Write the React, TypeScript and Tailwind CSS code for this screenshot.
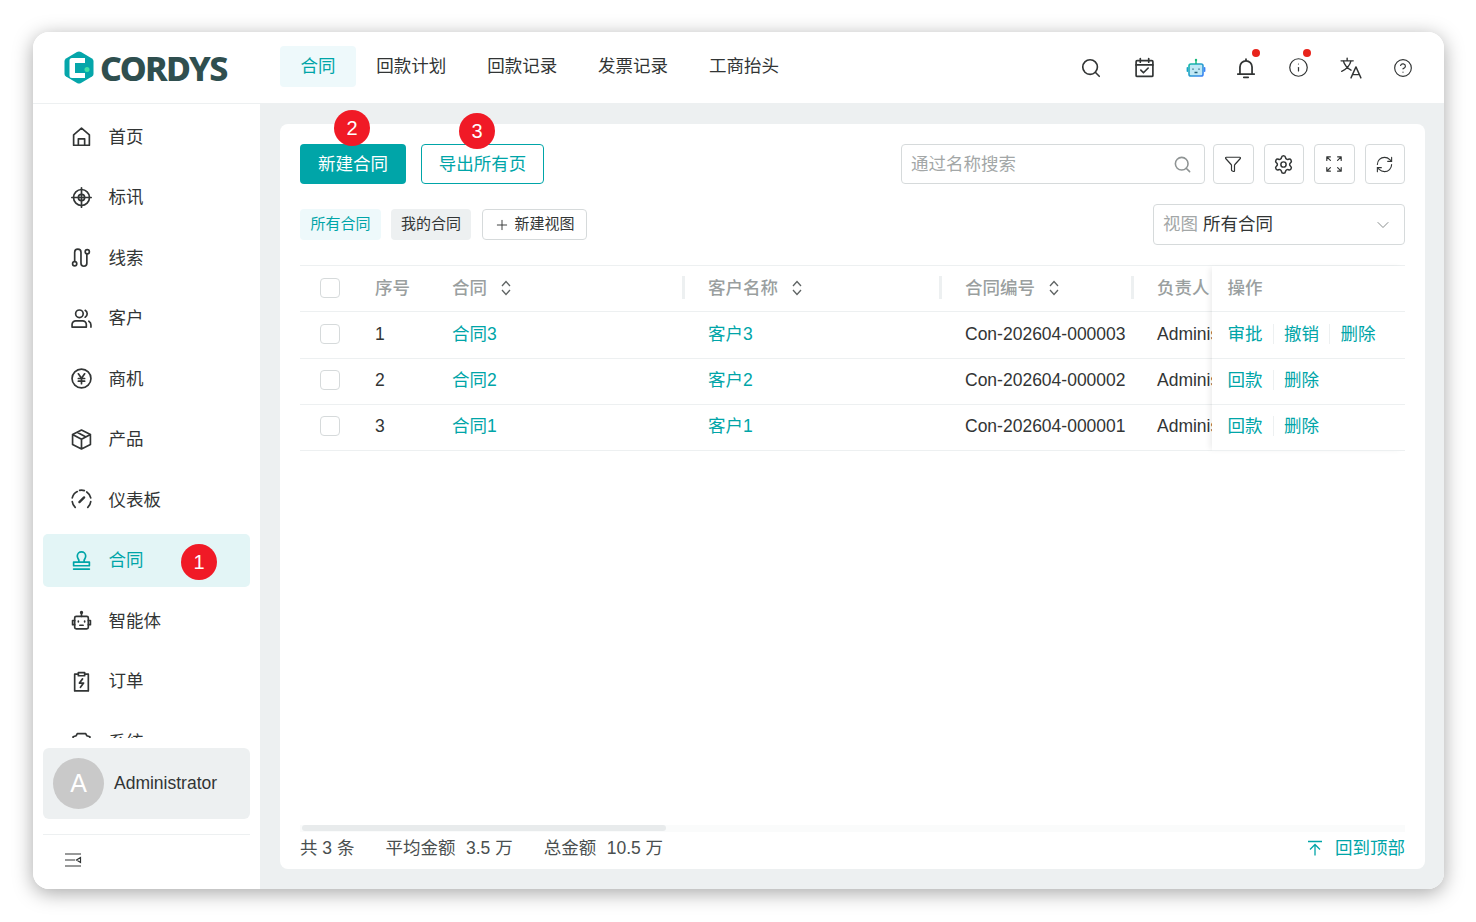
import { ChevronDown, CircleHelp, Funnel, Info, Plus, RefreshCw, Search, Settings } from 'lucide-react';
import type { ReactNode } from 'react';

function Ico({ children, size = 21 }: { children: ReactNode; size?: number }) {
  return (
    <svg width={size} height={size} viewBox="0 0 20 20" fill="none" stroke="currentColor" strokeWidth="1.600" strokeLinecap="round" strokeLinejoin="round" className="shrink-0">
      {children}
    </svg>
  );
}

const menu: { label: string; icon: ReactNode; active?: boolean }[] = [
  { label: '首页', icon: <path d="M2.500 8.500 10 2l7.500 6.500v9.800h-15ZM7 18v-5.800h6V18" /> },
  {
    label: '标讯',
    icon: (
      <>
        <circle cx="10" cy="10" r="7.600" />
        <circle cx="10" cy="10" r="3" />
        <path d="M10 .8v18.400M.8 10h18.400" />
      </>
    ),
  },
  {
    label: '线索',
    icon: (
      <>
        <path d="M3.500 13.500V5a3 3 0 0 1 6 0v10.500a2.800 2.800 0 0 0 5.600 0V7" />
        <circle cx="3.500" cy="16" r="2" />
        <circle cx="15.500" cy="4.500" r="2" />
      </>
    ),
  },
  {
    label: '客户',
    icon: (
      <>
        <circle cx="8" cy="5.500" r="3.600" />
        <path d="M1 18.200v-2.400a3.600 3.600 0 0 1 3.600-3.600h6.400a3.600 3.600 0 0 1 3.600 3.600v2.400ZM13.500 2.200a3.800 3.800 0 0 1 0 6.600M19 18.200v-2a4 4 0 0 0-2-3.600" />
      </>
    ),
  },
  {
    label: '商机',
    icon: (
      <>
        <circle cx="10" cy="10" r="9" />
        <path d="M7 5.500l3 4.200 3-4.200M10 9.700v5.300M7 10h6M7 12.500h6" />
      </>
    ),
  },
  { label: '产品', icon: <path d="M10 1 18.500 5.300v9.400L10 19l-8.500-4.300V5.300ZM1.500 5.300 10 9.800l8.500-4.500M10 9.800V19M5.800 3.200l8.500 4.400" /> },
  {
    label: '仪表板',
    icon: (
      <>
        <path d="M4 17.500A9 9 0 0 1 1.200 12M1.200 8.500A9 9 0 0 1 6 2.400M8.200 1.300a9 9 0 0 1 4.500.2M15 2.800a9 9 0 0 1 3.800 5.700M18.800 12a9 9 0 0 1-2.800 5.500" />
        <path d="M8 12.500 12.500 8" strokeWidth="2.200" />
      </>
    ),
  },
  {
    label: '合同',
    active: true,
    icon: (
      <>
        <path d="M7.500 11.500V10c0-1.200-1.500-2-1.500-4.200a4 4 0 0 1 8 0C14 8 12.500 8.800 12.500 10v1.500" />
        <path d="M2.500 15v-3.500h15V15ZM2.500 18.200h15" />
      </>
    ),
  },
  {
    label: '智能体',
    icon: (
      <>
        <rect x="3.500" y="6" width="13" height="12" rx="1.500" />
        <path d="M10 6V3M3.500 10H1.500v4h2M16.500 10h2v4h-2M8.500 14.500h3" />
        <circle cx="10" cy="2.300" r=".8" />
        <path d="M7 10.500v.8M13 10.500v.8" />
      </>
    ),
  },
  {
    label: '订单',
    icon: (
      <>
        <path d="M7 3H3.500v16h13V3H13M7 1.500h6V4.500H7Z" />
        <path d="M11 7.500 8 11.500h4l-3 4" />
      </>
    ),
  },
  {
    label: '系统',
    icon: <path d="M6 2.500h8l1 2 3 1v4l-2 2 1 3-2 3H5l-2-3 1-3-2-2v-4l3-1Z" />,
  },
];

const rows = [
  { no: 1, name: '合同3', customer: '客户3', code: 'Con-202604-000003', actions: ['审批', '撤销', '删除'] },
  { no: 2, name: '合同2', customer: '客户2', code: 'Con-202604-000002', actions: ['回款', '删除'] },
  { no: 3, name: '合同1', customer: '客户1', code: 'Con-202604-000001', actions: ['回款', '删除'] },
];

function RedBadge({ n, className }: { n: number; className: string }) {
  return (
    <span className={`absolute flex h-[36px] w-[36px] items-center justify-center rounded-full bg-[#f01a26] text-[20px] leading-none font-normal text-white ${className}`}>
      {n}
    </span>
  );
}

function Logo() {
  return (
    <div className="flex w-[247px] shrink-0 items-center pl-[31px]">
      <svg width="30" height="33" viewBox="0 0 30 33" className="shrink-0">
        <path d="M13 1 2 7.500Q.5 8.500.5 10v13q0 1.500 1.500 2.500L13 32q2 1 4 0l11-6.500q1.500-1 1.500-2.500V10q0-1.500-1.500-2.500L17 1q-2-1-4 0Z" fill="#05a6aa" />
        <path d="M21 7H8Q5.500 7 5.500 9.500v15Q5.500 27 8 27h13v-5H11V12h10Z" fill="#fff" />
        <rect x="11" y="12" width="12" height="10" fill="#05a6aa" />
        <circle cx="23" cy="18.500" r="2.500" fill="#3fe0a8" />
      </svg>
      <span className="ml-[6px] font-['Noto_Sans',sans-serif] text-[34px] leading-none font-extrabold tracking-[-1.600px] text-[#2f4f4f]">CORDYS</span>
    </div>
  );
}

function Header() {
  const tabs = ['合同', '回款计划', '回款记录', '发票记录', '工商抬头'];
  return (
    <header className="flex h-[72px] shrink-0 items-center border-b border-[#edf0f1] bg-white">
      <Logo />
      <nav className="flex h-[41px] -translate-y-[1px] items-center">
        {tabs.map((t, i) => (
          <span key={t} className={`flex h-full items-center rounded-[4px] px-[20.450px] ${i === 0 ? 'bg-[#eef9fb] text-[#00a5a8]' : 'text-[#323535]'}`}>
            {t}
          </span>
        ))}
      </nav>
      <div className="ml-auto flex items-center pr-[14px] text-[#323535]">
        <span className="flex w-[53px] justify-center"><Search size={22} strokeWidth={1.800} /></span>
        <span className="flex w-[54px] justify-center">
          <Ico>
            <rect x="2" y="3.500" width="16" height="15" rx="1" />
            <path d="M2 7.500h16M6 1.500v3.500M14 1.500v3.500M6.500 12.500l2.500 2.500 4.500-4.500" />
          </Ico>
        </span>
        <span className="flex w-[50px] justify-center">
          <svg width="20" height="20" viewBox="0 0 20 20" fill="none">
            <defs>
              <linearGradient id="bot" x1="0" y1="0" x2="1" y2="1">
                <stop offset="0" stopColor="#14b8a6" />
                <stop offset="1" stopColor="#3b82f6" />
              </linearGradient>
            </defs>
            <rect x="3" y="6" width="14" height="12" rx="1.800" fill="#bfe8f5" stroke="url(#bot)" strokeWidth="1.600" />
            <path d="M10 6V2.500" stroke="#14b87a" strokeWidth="1.400" />
            <circle cx="10" cy="2" r="1.200" fill="#14b87a" />
            <rect x=".6" y="9" width="1.600" height="5" rx=".8" fill="#14a5c8" />
            <rect x="17.800" y="9" width="1.600" height="5" rx=".8" fill="#3b82f6" />
            <path d="M7 10.500v1.200M13 10.500v1.200M8.500 14.500h3" stroke="#1f5f7a" strokeWidth="1.300" />
          </svg>
        </span>
        <span className="relative flex w-[50px] justify-center">
          <Ico size={22}>
            <path d="M2.500 15.500h15M4.500 15.500V9a5.500 5.500 0 0 1 11 0v6.500M8 18.500h4M10 2v1.500" />
          </Ico>
          <span className="absolute top-[-8px] right-[11px] h-[8px] w-[8px] rounded-full bg-[#e8241c]" />
        </span>
        <span className="relative flex w-[54px] justify-center">
          <Info size={21} strokeWidth={1.400} />
          <span className="absolute top-[-8px] right-[14px] h-[8px] w-[8px] rounded-full bg-[#e8241c]" />
        </span>
        <span className="flex w-[52px] justify-center">
          <svg width="22" height="22" viewBox="0 0 20 20" fill="none" stroke="currentColor" strokeWidth="1.300" strokeLinecap="round" strokeLinejoin="round">
            <path d="M1 3.500h11M6.500 1v2.500M10 3.500C9 7.500 6 11 1.500 13M3 3.500c1 3.500 3.500 6.500 7 8.500M10 19l4.500-10L19 19M11.500 16h6" />
          </svg>
        </span>
        <span className="mr-[2px] flex w-[51px] justify-center"><CircleHelp size={20} strokeWidth={1.400} /></span>
      </div>
    </header>
  );
}

function Sidebar() {
  return (
    <aside className="flex w-[227px] shrink-0 flex-col bg-white px-[10px]">
      <div className="flex h-[634px] shrink-0 flex-col gap-[8px] overflow-hidden pt-[6.500px]">
        {menu.map((m) => (
          <div key={m.label} className={`relative flex h-[52.500px] shrink-0 items-center gap-[16.500px] rounded-[5px] pl-[28px] ${m.active ? 'bg-[#e3f5f6] text-[#00a5a8]' : 'text-[#323535]'}`}>
            <Ico>{m.icon}</Ico>
            <span>{m.label}</span>
            {m.active && <RedBadge n={1} className="top-[10px] left-[138px]" />}
          </div>
        ))}
      </div>
      <div className="mt-[10px] flex h-[71px] shrink-0 items-center gap-[10px] rounded-[6px] bg-[#edf0f1] pl-[10px]">
        <span className="flex h-[51px] w-[51px] items-center justify-center rounded-full bg-[#c9c9c9] text-[25px] text-white">A</span>
        <span className="text-[#323535]">Administrator</span>
      </div>
      <div className="mt-[15px] flex flex-1 items-center border-t border-[#edf0f1] pb-[4px] pl-[21px] text-[#323535]">
        <svg width="18" height="14" viewBox="0 0 18 14" fill="none" stroke="currentColor" strokeWidth="1.200">
          <path d="M1 1h16M1 7h10M1 13h16M16.500 4.500 12.500 7l4 2.500Z" />
        </svg>
      </div>
    </aside>
  );
}

function SortIcon() {
  return (
    <svg width="10" height="16" viewBox="0 0 10 16" fill="none" stroke="#5f6464" strokeWidth="1.300" className="shrink-0">
      <path d="M1 6 5 1.500 9 6M1 10l4 4.500L9 10" />
    </svg>
  );
}

function IconButton({ children }: { children: ReactNode }) {
  return <button className="flex h-[40px] w-[40.500px] items-center justify-center rounded-[4px] border border-[#d6dadb] bg-white text-[#323535]">{children}</button>;
}

function Toolbar() {
  return (
    <div className="flex h-[40px] items-center">
      <button className="relative h-[40px] w-[106px] rounded-[4px] bg-[#00a5a8] text-white">
        新建合同
        <RedBadge n={2} className="top-[-34px] left-[34px]" />
      </button>
      <button className="relative ml-[15px] h-[40px] w-[123px] rounded-[4px] border border-[#00a5a8] bg-white text-[#00a5a8]">
        导出所有页
        <RedBadge n={3} className="top-[-32px] left-[37px]" />
      </button>
      <div className="ml-auto flex h-[40px] w-[304px] items-center justify-between rounded-[4px] border border-[#d6dadb] pr-[12px] pl-[9px] text-[#a3a7a7]">
        通过名称搜索
        <Search size={19} strokeWidth={2} className="text-[#8f9494]" />
      </div>
      <div className="ml-[8px] flex gap-[10px]">
        <IconButton><Funnel size={18} strokeWidth={1.600} /></IconButton>
        <IconButton><Settings size={21} strokeWidth={1.700} /></IconButton>
        <IconButton>
          <svg width="18" height="18" viewBox="0 0 20 20" fill="none" stroke="currentColor" strokeWidth="1.300" strokeLinecap="round" strokeLinejoin="round">
            <path d="M2 6V2h4M2 2l4 4M18 6V2h-4M18 2l-4 4M2 14v4h4M2 18l4-4M18 14v4h-4M18 18l-4-4" />
          </svg>
        </IconButton>
        <IconButton><RefreshCw size={19} strokeWidth={1.400} /></IconButton>
      </div>
    </div>
  );
}

function ViewBar() {
  return (
    <div className="mt-[20px] flex h-[41px] items-center text-[15px]">
      <span className="flex h-[31px] w-[81px] items-center justify-center rounded-[4px] bg-[#eef9fb] text-[#00a5a8]">所有合同</span>
      <span className="ml-[10px] flex h-[31px] w-[80px] items-center justify-center rounded-[4px] bg-[#edf0f1] text-[#323535]">我的合同</span>
      <span className="ml-[11px] flex h-[31px] w-[105px] items-center justify-center gap-[4px] rounded-[4px] border border-[#d6dadb] text-[#323535]">
        <Plus size={16} strokeWidth={1.400} />
        新建视图
      </span>
      <div className="ml-auto flex h-[41px] w-[252px] items-center rounded-[4px] border border-[#d6dadb] pr-[11px] pl-[9px] text-[17.500px]">
        <span className="text-[#a3a7a7]">视图</span>
        <span className="ml-[5px] text-[#323535]">所有合同</span>
        <ChevronDown size={20} strokeWidth={1.100} className="ml-auto text-[#7d8282]" />
      </div>
    </div>
  );
}

function HeadCell({ label, width, sort, divider }: { label: string; width: string; sort?: boolean; divider?: boolean }) {
  return (
    <div className={`relative flex h-full shrink-0 items-center ${width}`}>
      <span>{label}</span>
      {sort && <span className="ml-[14px]"><SortIcon /></span>}
      {divider && <span className="absolute right-[23px] h-[23px] w-[3px] bg-[#edf0f1]" />}
    </div>
  );
}

function Checkbox() {
  return (
    <div className="flex w-[75px] shrink-0 pl-[20px]">
      <span className="h-[20px] w-[20px] rounded-[4px] border border-[#d6dadb] bg-white" />
    </div>
  );
}

function ContractTable() {
  return (
    <div className="mt-[20px] flex border-t border-[#edf0f1]">
      <div className="w-[912px] shrink-0 overflow-hidden whitespace-nowrap">
        <div className="flex h-[46.250px] items-center border-b border-[#edf0f1] pb-[2px] font-medium text-[#9a9f9f]">
          <Checkbox />
          <HeadCell label="序号" width="w-[77px]" />
          <HeadCell label="合同" width="w-[256px]" sort divider />
          <HeadCell label="客户名称" width="w-[257px]" sort divider />
          <HeadCell label="合同编号" width="w-[192px]" sort divider />
          <HeadCell label="负责人" width="w-[60px]" />
        </div>
        {rows.map((r) => (
          <div key={r.no} className="flex h-[46.250px] items-center border-b border-[#edf0f1] pb-[2px] text-[#323535]">
            <Checkbox />
            <span className="w-[77px] shrink-0">{r.no}</span>
            <span className="w-[256px] shrink-0 text-[#00a5a8]">{r.name}</span>
            <span className="w-[257px] shrink-0 text-[#00a5a8]">{r.customer}</span>
            <span className="w-[192px] shrink-0">{r.code}</span>
            <span className="shrink-0">Administrator</span>
          </div>
        ))}
      </div>
      <div className="relative w-[193px] shrink-0 bg-white shadow-[-4px_0_6px_-2px_rgba(0,0,0,0.08)]">
        <div className="flex h-[46.250px] items-center border-b border-[#edf0f1] pb-[2px] pl-[15.500px] font-medium text-[#9a9f9f]">
          操作
        </div>
        {rows.map((r) => (
          <div key={r.no} className="flex h-[46.250px] items-center border-b border-[#edf0f1] pb-[2px] pl-[15.500px] text-[#00a5a8]">
            {r.actions.map((a, i) => (
              <span key={a} className="flex items-center">
                {i > 0 && <span className="mx-[10.250px] h-[20px] w-[1px] bg-[#edf0f1]" />}
                {a}
              </span>
            ))}
          </div>
        ))}
      </div>
    </div>
  );
}

function Footer() {
  return (
    <>
      <div className="mt-auto h-[7px] bg-[#fafbfb]">
        <div className="ml-[2px] h-[6px] w-[364px] rounded-full bg-[#e8ebec]" />
      </div>
      <div className="mt-[6px] flex h-[20px] items-center text-[#4a4f4f]">
        <span>共 3 条</span>
        <span className="ml-[31px]">平均金额</span>
        <span className="ml-[10.500px]">3.5 万</span>
        <span className="ml-[31px]">总金额</span>
        <span className="ml-[10.500px]">10.5 万</span>
        <span className="ml-auto flex items-center gap-[12px] text-[#00a5a8]">
          <svg width="16" height="16" viewBox="0 0 16 16" fill="none" stroke="currentColor" strokeWidth="1.300">
            <path d="M1 1.500h14M8 15.500V5M3 9.500l5-5 5 5" />
          </svg>
          回到顶部
        </span>
      </div>
    </>
  );
}

export default function App() {
  return (
    <div className="h-[922px] w-[1476px] overflow-hidden bg-white pt-[32px] pl-[33px] font-['Liberation_Sans','Noto_Sans_CJK_SC',sans-serif] text-[17.500px]">
      <div className="flex h-[857px] w-[1411px] flex-col overflow-hidden rounded-[16px] shadow-[0_4px_20px_rgba(0,0,0,0.35)]">
        <Header />
        <div className="flex min-h-0 flex-1">
          <Sidebar />
          <main className="min-w-0 flex-1 bg-[#edf0f1] pt-[20px] pr-[19px] pb-[20px] pl-[20px]">
            <div className="flex h-full flex-col rounded-[8px] bg-white px-[20px] pt-[20px] pb-[11px]">
              <Toolbar />
              <ViewBar />
              <ContractTable />
              <Footer />
            </div>
          </main>
        </div>
      </div>
    </div>
  );
}
